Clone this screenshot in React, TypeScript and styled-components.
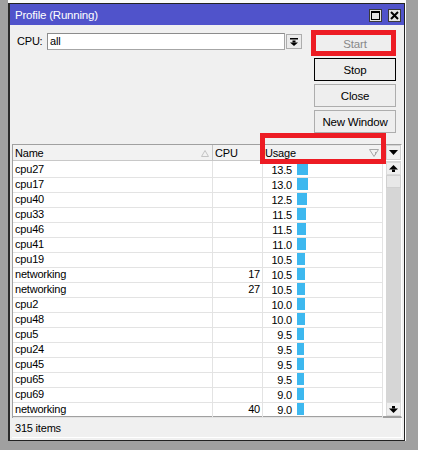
import React from 'react';
import styled, { createGlobalStyle } from 'styled-components';

const Global = createGlobalStyle`
  html, body { margin: 0; padding: 0; background: #ffffff; }
  body {
    font-family: "Liberation Sans", Arial, sans-serif;
    font-size: 11px;
    letter-spacing: -0.2px;
    color: #000;
  }
  * { box-sizing: border-box; }
`;

const Desk = styled.div`
  width: 418px;
  height: 450px;
  background: #a0a0a0;
  padding-left: 8px;
`;

const Win = styled.div`
  width: 398px;
  height: 441px;
  border-top: 3px solid #fafafa;
  border-right: 1px solid #ffffff;
  display: flex;
  flex-direction: column;
`;

const Frame = styled.div`
  flex: 1;
  display: flex;
  flex-direction: column;
  border-top: 1px solid #222;
  border-left: 2px solid #2a2a2a;
  border-right: 1px solid #222;
  border-bottom: 1px solid #222;
`;

const TitleBar = styled.div`
  height: 21px;
  background: #5053cb;
  color: #fff;
  display: flex;
  align-items: center;
  padding-left: 5px;
`;

const TitleText = styled.span`
  font-size: 11.5px;
  line-height: 22px;
`;

const TitleButtons = styled.div`
  margin-left: auto;
  display: flex;
  gap: 6px;
  padding-right: 3px;
  align-self: flex-end;
  padding-bottom: 3px;
`;

const TitleBtn = styled.div`
  width: 13px;
  height: 13px;
  background: #e4e4e4;
  border: 1px solid #3a3a3a;
  display: flex;
  align-items: center;
  justify-content: center;
`;

const Body = styled.div`
  flex: 1;
  background: #f0f0f0;
  display: flex;
  flex-direction: column;
`;

const TopArea = styled.div`
  display: flex;
  padding: 7px 8px 11px 7px;
`;

const CpuRow = styled.div`
  display: flex;
  align-items: flex-start;
`;

const Label = styled.div`
  width: 30px;
  margin-top: 1px;
  line-height: 17px;
`;

const Input = styled.div`
  margin-top: 1px;
  width: 238px;
  height: 17px;
  background: #fff;
  border: 1px solid #a6a6a6;
  border-top-color: #8c8c8c;
  border-left-color: #8c8c8c;
  padding-left: 2px;
  line-height: 15px;
`;

const DropBtn = styled.div`
  margin-left: 1px;
  margin-top: 2px;
  width: 16px;
  height: 15px;
  background: #ebebeb;
  border: 1px solid #adadad;
  display: flex;
  align-items: center;
  justify-content: center;
`;

const ButtonCol = styled.div`
  margin-left: auto;
  width: 82px;
  display: flex;
  flex-direction: column;
  gap: 3px;
`;

const Btn = styled.div<{ $disabled?: boolean; $focused?: boolean }>`
  position: relative;
  height: 23px;
  background: #eeeeee;
  border: 1px solid ${(p) => (p.$focused ? '#000' : '#adadad')};
  color: ${(p) => (p.$disabled ? '#888' : '#000')};
  display: flex;
  align-items: center;
  justify-content: center;
  font-size: 11.5px;
`;

const Highlight = styled.div<{ $t: number; $r: number; $b: number; $l: number }>`
  position: absolute;
  top: ${(p) => p.$t}px;
  right: ${(p) => p.$r}px;
  bottom: ${(p) => p.$b}px;
  left: ${(p) => p.$l}px;
  border: 5px solid #ed1c24;
  pointer-events: none;
  z-index: 2;
`;

const Table = styled.div`
  margin: 0 2px;
  display: flex;
  border-top: 1px solid #a0a0a0;
  border-left: 1px solid #a0a0a0;
  border-right: 1px solid #ffffff;
  border-bottom: 2px solid #a0a0a0;
  background: #fff;
`;

const Main = styled.div`
  width: 373px;
  display: flex;
  flex-direction: column;
`;

const Cols = `
  display: grid;
  grid-template-columns: 200px 50px 120px;
`;

const HeaderRow = styled.div`
  ${Cols}
  height: 16px;
`;

const HeadCell = styled.div`
  position: relative;
  background: #f2f2f2;
  border-right: 1px solid #c4c4c4;
  border-bottom: 1px solid #c8c8c8;
  padding: 2px 0 0 2px;
  line-height: 13px;
  display: flex;
  align-items: center;
`;

const HeadIcon = styled.span`
  margin-left: auto;
  margin-right: 3px;
  margin-top: -1px;
  display: flex;
`;

const Row = styled.div`
  ${Cols}
  height: 15px;
`;

const Cell = styled.div<{ $align?: 'left' | 'right' }>`
  border-right: 1px solid #e3e3e3;
  border-bottom: 1px solid #e3e3e3;
  line-height: 16px;
  text-align: ${(p) => p.$align || 'left'};
  padding: ${(p) => (p.$align === 'right' ? '0 2px 0 0' : '0 0 0 2px')};
  white-space: nowrap;
`;

const UsageCell = styled.div`
  border-right: 1px solid #e3e3e3;
  border-bottom: 1px solid #e3e3e3;
  display: flex;
  align-items: center;
`;

const Num = styled.span`
  width: 29px;
  text-align: right;
  line-height: 14px;
  padding-top: 2px;
`;

const Bar = styled.span`
  margin-left: 5px;
  height: 12px;
  background: #3db8ef;
`;

const ScrollCol = styled.div`
  margin-left: 3px;
  width: 15px;
  display: flex;
  flex-direction: column;
`;

const ColBtn = styled.div`
  height: 15px;
  margin-bottom: 1px;
  background: #efefef;
  border: 1px solid #d2d2d2;
  display: flex;
  align-items: center;
  justify-content: center;
`;

const Track = styled.div`
  flex: 1;
  background: #d6d6d6;
  display: flex;
  flex-direction: column;
  padding-top: 1px;
`;

const ScrollBtn = styled.div<{ $h: number }>`
  height: ${(p) => p.$h}px;
  background: #efefef;
  border: 1px solid #dadada;
  display: flex;
  align-items: center;
  justify-content: center;
`;

const Thumb = styled.div`
  height: 13px;
  background: #e8e8e8;
  border: 1px solid #d0d0d0;
`;

const Spacer = styled.div`
  flex: 1;
`;

const Status = styled.div`
  margin: 0 2px 2px 2px;
  height: 20px;
  border-right: 1px solid #fff;
  border-bottom: 1px solid #fff;
  padding: 1px 0 0 3px;
  line-height: 19px;
`;

const rows: [string, string, number][] = [
  ['cpu27', '', 13.5],
  ['cpu17', '', 13.0],
  ['cpu40', '', 12.5],
  ['cpu33', '', 11.5],
  ['cpu46', '', 11.5],
  ['cpu41', '', 11.0],
  ['cpu19', '', 10.5],
  ['networking', '17', 10.5],
  ['networking', '27', 10.5],
  ['cpu2', '', 10.0],
  ['cpu48', '', 10.0],
  ['cpu5', '', 9.5],
  ['cpu24', '', 9.5],
  ['cpu45', '', 9.5],
  ['cpu65', '', 9.5],
  ['cpu69', '', 9.0],
  ['networking', '40', 9.0],
];

const MaxIcon = () => (
  <svg width="9" height="9" viewBox="0 0 9 9">
    <rect x="0.5" y="0.5" width="8" height="8" fill="none" stroke="#000" />
    <rect x="0" y="0" width="9" height="2" fill="#000" />
  </svg>
);

const CloseIcon = () => (
  <svg width="9" height="9" viewBox="0 0 9 9">
    <path d="M1 1 L8 8 M8 1 L1 8" stroke="#000" strokeWidth="2" />
  </svg>
);

const DropIcon = () => (
  <svg width="8" height="8" viewBox="0 0 8 8">
    <rect x="0" y="0" width="8" height="1.5" fill="#000" />
    <rect x="2.5" y="2.5" width="3" height="2" fill="#000" />
    <polygon points="0,4.5 8,4.5 4,8" fill="#000" />
  </svg>
);

const DownTri = () => (
  <svg width="9" height="5" viewBox="0 0 9 5">
    <polygon points="0,0 9,0 4.5,5" fill="#000" />
  </svg>
);

const UpArrow = () => (
  <svg width="9" height="7" viewBox="0 0 9 7">
    <polygon points="0,4.5 4.5,0 9,4.5" fill="#000" />
    <rect x="3" y="4.5" width="3" height="2.5" fill="#000" />
  </svg>
);

const DownArrow = () => (
  <svg width="9" height="7" viewBox="0 0 9 7">
    <rect x="3" y="0" width="3" height="2.5" fill="#000" />
    <polygon points="0,2.5 9,2.5 4.5,7" fill="#000" />
  </svg>
);

const SortUp = () => (
  <svg width="8" height="7" viewBox="0 0 8 7">
    <polygon points="0.5,6.5 4,0.5 7.5,6.5" fill="none" stroke="#c4c4c4" />
  </svg>
);

const FilterIcon = () => (
  <svg width="10" height="8" viewBox="0 0 10 8">
    <polygon points="0.5,0.5 9.5,0.5 5,7.5" fill="none" stroke="#a8a8a8" />
    <line x1="6.5" y1="3" x2="6.5" y2="6" stroke="#a8a8a8" />
  </svg>
);

export default function App() {
  return (
    <>
      <Global />
      <Desk>
        <Win>
          <Frame>
            <TitleBar>
              <TitleText>Profile (Running)</TitleText>
              <TitleButtons>
                <TitleBtn><MaxIcon /></TitleBtn>
                <TitleBtn><CloseIcon /></TitleBtn>
              </TitleButtons>
            </TitleBar>
            <Body>
              <TopArea>
                <CpuRow>
                  <Label>CPU:</Label>
                  <Input>all</Input>
                  <DropBtn><DropIcon /></DropBtn>
                </CpuRow>
                <ButtonCol>
                  <Btn $disabled>
                    Start
                    <Highlight $t={-3} $r={-1} $b={-2} $l={-4} />
                  </Btn>
                  <Btn $focused>Stop</Btn>
                  <Btn>Close</Btn>
                  <Btn>New Window</Btn>
                </ButtonCol>
              </TopArea>
              <Table>
                <Main>
                  <HeaderRow>
                    <HeadCell>
                      Name
                      <HeadIcon><SortUp /></HeadIcon>
                    </HeadCell>
                    <HeadCell>CPU</HeadCell>
                    <HeadCell>
                      Usage
                      <HeadIcon><FilterIcon /></HeadIcon>
                      <Highlight $t={-12} $r={-4} $b={-4} $l={-3} />
                    </HeadCell>
                  </HeaderRow>
                  {rows.map(([name, cpu, usage], i) => (
                    <Row key={i}>
                      <Cell>{name}</Cell>
                      <Cell $align="right">{cpu}</Cell>
                      <UsageCell>
                        <Num>{usage.toFixed(1)}</Num>
                        <Bar style={{ width: `${Math.round(usage * 0.925 - 1.5)}px` }} />
                      </UsageCell>
                    </Row>
                  ))}
                </Main>
                <ScrollCol>
                  <ColBtn><DownTri /></ColBtn>
                  <Track>
                    <ScrollBtn $h={13}><UpArrow /></ScrollBtn>
                    <Thumb />
                    <Spacer />
                    <ScrollBtn $h={14}><DownArrow /></ScrollBtn>
                  </Track>
                </ScrollCol>
              </Table>
              <Status>315 items</Status>
            </Body>
          </Frame>
        </Win>
      </Desk>
    </>
  );
}
